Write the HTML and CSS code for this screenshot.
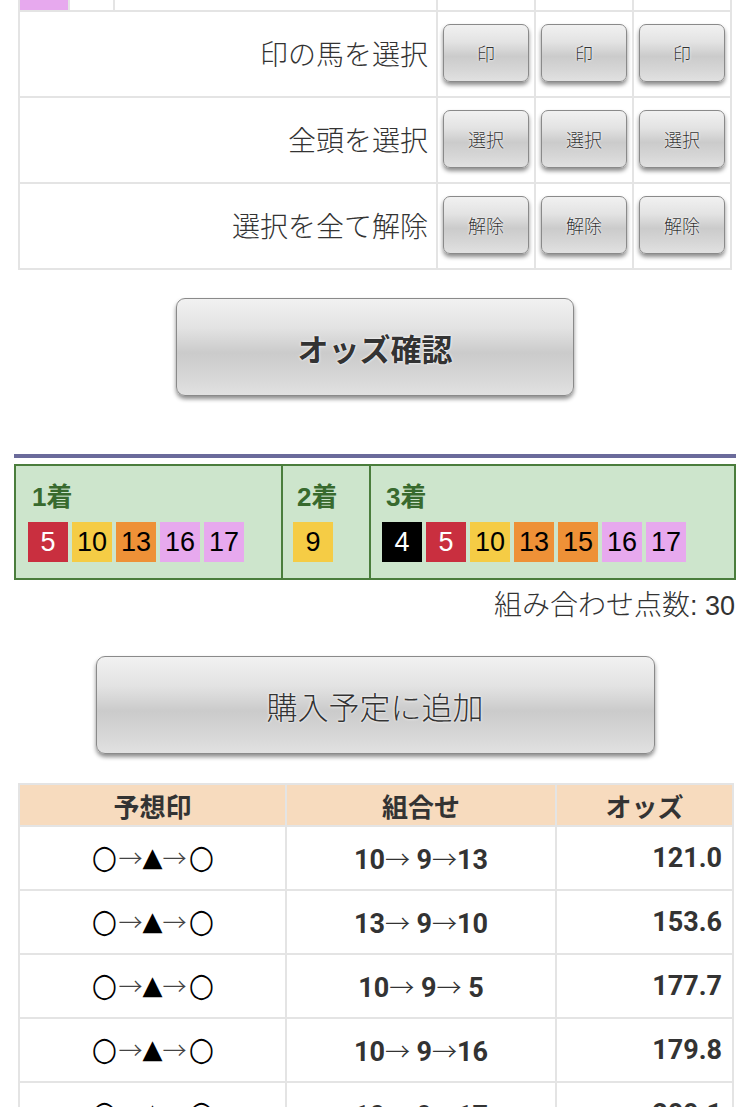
FILE: index.html
```html
<!DOCTYPE html>
<html lang="ja">
<head>
<meta charset="utf-8">
<link rel="stylesheet" href="styles.css">
</head>
<body>
<div class="page">
  <table class="sel">
    <colgroup>
      <col class="c1"><col class="c2"><col class="c3"><col class="cb"><col class="cb"><col class="cb">
    </colgroup>
    <tr class="partial">
      <td class="pink"></td><td></td><td></td><td></td><td></td><td></td>
    </tr>
    <tr>
      <td colspan="3" class="label">印の馬を選択</td>
      <td class="bc"><button class="btn sm">印</button></td>
      <td class="bc"><button class="btn sm">印</button></td>
      <td class="bc"><button class="btn sm">印</button></td>
    </tr>
    <tr>
      <td colspan="3" class="label">全頭を選択</td>
      <td class="bc"><button class="btn sm">選択</button></td>
      <td class="bc"><button class="btn sm">選択</button></td>
      <td class="bc"><button class="btn sm">選択</button></td>
    </tr>
    <tr>
      <td colspan="3" class="label">選択を全て解除</td>
      <td class="bc"><button class="btn sm">解除</button></td>
      <td class="bc"><button class="btn sm">解除</button></td>
      <td class="bc"><button class="btn sm">解除</button></td>
    </tr>
  </table>

  <div class="center odds-wrap"><button class="btn big strong">オッズ確認</button></div>

  <div class="rule"></div>

  <div class="picks">
    <div class="pc pc1">
      <div class="plabel">1着</div>
      <div class="chips">
        <span class="chip red">5</span><span class="chip yellow">10</span><span class="chip orange">13</span><span class="chip pink">16</span><span class="chip pink">17</span>
      </div>
    </div>
    <div class="pc pc2">
      <div class="plabel">2着</div>
      <div class="chips">
        <span class="chip yellow">9</span>
      </div>
    </div>
    <div class="pc pc3">
      <div class="plabel">3着</div>
      <div class="chips">
        <span class="chip black">4</span><span class="chip red">5</span><span class="chip yellow">10</span><span class="chip orange">13</span><span class="chip orange">15</span><span class="chip pink">16</span><span class="chip pink">17</span>
      </div>
    </div>
  </div>

  <div class="count">組み合わせ点数<span class="num">: 30</span></div>

  <div class="center add-wrap"><button class="btn big light">購入予定に追加</button></div>

  <table class="odds">
    <colgroup><col class="o1"><col class="o2"><col class="o3"></colgroup>
    <thead>
      <tr><th>予想印</th><th>組合せ</th><th>オッズ</th></tr>
    </thead>
    <tbody>
      <tr><td class="mark"><span class="ci">○</span><span class="ar">→</span><span class="tr">▲</span><span class="ar">→</span><span class="ci">○</span></td><td class="combo">10<span class="ar2">→</span> 9<span class="ar2">→</span>13</td><td class="val">121.0</td></tr>
      <tr><td class="mark"><span class="ci">○</span><span class="ar">→</span><span class="tr">▲</span><span class="ar">→</span><span class="ci">○</span></td><td class="combo">13<span class="ar2">→</span> 9<span class="ar2">→</span>10</td><td class="val">153.6</td></tr>
      <tr><td class="mark"><span class="ci">○</span><span class="ar">→</span><span class="tr">▲</span><span class="ar">→</span><span class="ci">○</span></td><td class="combo">10<span class="ar2">→</span> 9<span class="ar2">→</span> 5</td><td class="val">177.7</td></tr>
      <tr><td class="mark"><span class="ci">○</span><span class="ar">→</span><span class="tr">▲</span><span class="ar">→</span><span class="ci">○</span></td><td class="combo">10<span class="ar2">→</span> 9<span class="ar2">→</span>16</td><td class="val">179.8</td></tr>
      <tr><td class="mark"><span class="ci">○</span><span class="ar">→</span><span class="tr">▲</span><span class="ar">→</span><span class="ci">○</span></td><td class="combo">10<span class="ar2">→</span> 9<span class="ar2">→</span>17</td><td class="val">209.1</td></tr>
    </tbody>
  </table>
</div>
</body>
</html>
```

FILE: styles.css
```css
html, body {
  margin: 0;
  padding: 0;
  background: #fff;
}
body {
  font-family: "Noto Sans CJK JP", "Noto Sans", sans-serif;
  color: #333;
  overflow: hidden;
}
.page {
  width: 750px;
}

/* selection table */
.sel {
  border-collapse: collapse;
  table-layout: fixed;
  width: 714px;
  margin: -42px 0 0 18px;
  border: 2px solid #e4e4e4;
}
.sel td {
  border: 2px solid #e4e4e4;
  padding: 0;
  height: 84px;
}
.sel .partial td {
  height: 50px;
}
.sel td.pink {
  background: #e7a9ee;
}
.c1 { width: 50px; }
.c2 { width: 45px; }
.c3 { width: 323px; }
.cb { width: 98px; }
.sel td.label {
  text-align: right;
  font-size: 28px;
  font-weight: 300;
  height: 81px;
  padding: 0 8px 3px 0;
  color: #333;
}
.bc {
  text-align: center;
  vertical-align: middle;
}

/* buttons */
.btn {
  font-family: "Noto Sans CJK JP", sans-serif;
  color: #333;
  border: 1.5px solid #8a8a8a;
  border-radius: 7px;
  background: linear-gradient(#f1f1f1 0%, #e3e3e3 30%, #cbcbcb 56%, #d6d6d6 80%, #e1e1e1 100%);
  box-shadow: 0 3px 4px rgba(0, 0, 0, 0.45);
  text-shadow: 0 0 3px #fff, 0 0 1px #fff;
  padding: 0;
  cursor: pointer;
}
.btn.sm {
  width: 86px;
  height: 58px;
  font-size: 18px;
  font-weight: 300;
  margin-top: -2px;
}
.btn.big {
  width: 398px;
  height: 98px;
  font-size: 31px;
  border-radius: 9px;
}
.btn.strong {
  font-weight: bold;
}
.btn.light {
  font-weight: 300;
}
.center {
  display: flex;
  justify-content: center;
}
.odds-wrap {
  margin-top: 28px;
}
.add-wrap {
  margin-top: 32px;
}
.add-wrap .btn.big {
  width: 559px;
}

.rule {
  height: 4px;
  background: #6b6b9b;
  margin: 58px 14px 0 14px;
}

/* picks */
.picks {
  display: flex;
  margin: 6px 14px 0 14px;
  border: 2px solid #4a7d3c;
  background: #cde5cc;
}
.pc {
  box-sizing: border-box;
  padding: 14px 11px 16px 12px;
}
.pc1 { width: 265px; }
.pc2 { width: 88px; border-left: 2px solid #4a7d3c; padding-left: 10px; }
.pc3 { flex: 1; border-left: 2px solid #4a7d3c; padding-left: 11px; }
.plabel {
  font-family: "Liberation Sans", "Noto Sans CJK JP", sans-serif;
  font-weight: bold;
  font-size: 26px;
  line-height: 34px;
  color: #386a2e;
  padding-left: 4px;
  margin-bottom: 8px;
}
.chips {
  display: flex;
  gap: 4px;
}
.chip {
  width: 40px;
  height: 40px;
  display: flex;
  align-items: center;
  justify-content: center;
  font-family: "Liberation Sans", sans-serif;
  font-size: 27px;
  color: #000;
}
.chip.red { background: #c92f3f; color: #fff; }
.chip.yellow { background: #f5cc45; }
.chip.orange { background: #ee9137; }
.chip.pink { background: #e7a9ee; }
.chip.black { background: #000; color: #fff; }

.count {
  text-align: right;
  font-size: 28px;
  font-weight: 300;
  line-height: 36px;
  margin: 5px 15px 0 0;
  color: #333;
}
.count .num {
  font-family: "Liberation Sans", sans-serif;
  font-weight: normal;
  font-size: 27px;
}

/* odds table */
.odds {
  border-collapse: collapse;
  table-layout: fixed;
  width: 714px;
  margin: 29px 0 0 18px;
  border: 2px solid #e4e4e4;
}
.o1 { width: 267px; }
.o2 { width: 270px; }
.o3 { width: 177px; }
.odds th {
  background: #f7dbbe;
  border: 2px solid #e4e4e4;
  height: 40px;
  padding: 0;
  font-size: 26px;
  font-weight: bold;
  color: #333;
}
.odds td {
  border: 2px solid #e4e4e4;
  height: 62px;
  padding: 0;
  color: #333;
}
.odds td.mark {
  text-align: center;
  color: #000;
  white-space: nowrap;
  height: 58px;
  padding-bottom: 4px;
}
.ci {
  font-family: "DejaVu Sans", sans-serif;
  font-size: 33px;
  display: inline-block;
  transform: scaleX(0.88);
  vertical-align: middle;
}
.tr {
  font-family: "DejaVu Sans", sans-serif;
  font-size: 26px;
  vertical-align: middle;
}
.ar {
  font-family: "Noto Sans CJK JP", sans-serif;
  font-weight: 300;
  font-size: 24px;
  color: #444;
  vertical-align: middle;
}
.combo {
  text-align: center;
  font-family: Roboto, "Liberation Sans", sans-serif;
  font-weight: bold;
  font-size: 27px;
  white-space: pre;
}
.ar2 {
  font-family: "Noto Sans CJK JP", sans-serif;
  font-weight: 300;
  font-size: 25px;
}
.odds td.val {
  text-align: right;
  font-family: Roboto, "Liberation Sans", sans-serif;
  font-weight: bold;
  font-size: 27px;
  padding-right: 10px;
}
```
